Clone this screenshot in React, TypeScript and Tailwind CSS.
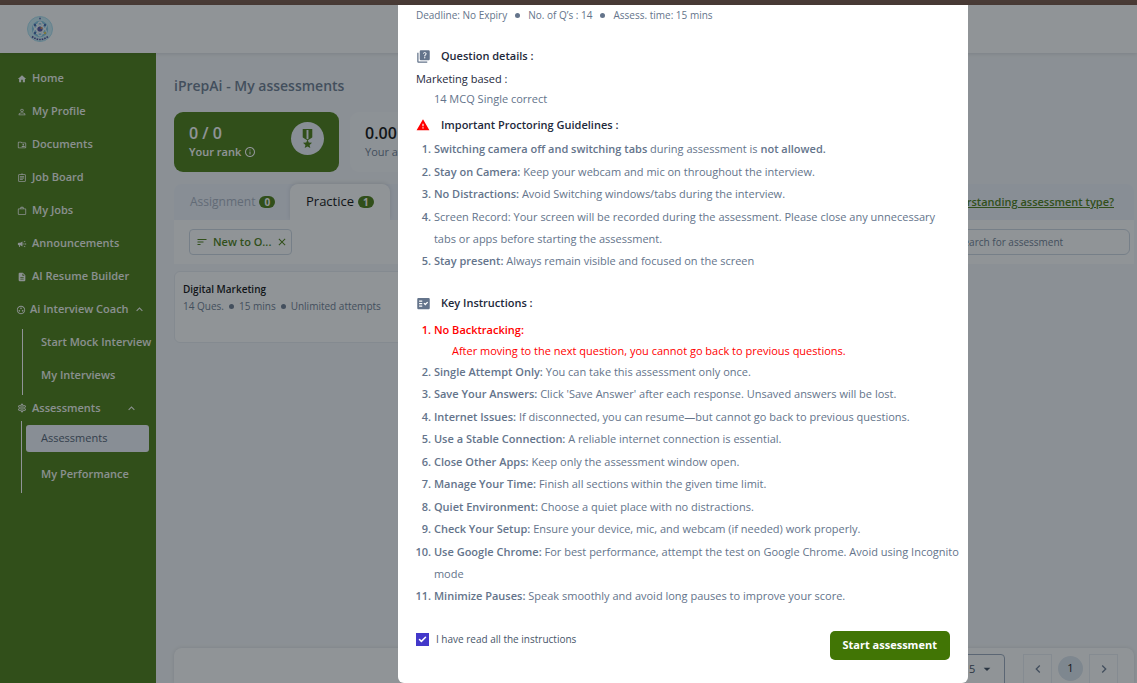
import { useState } from 'react';
import type { ReactNode } from 'react';
import type { IconType } from 'react-icons';
import { Check } from 'lucide-react';
import {
  MdArrowDropDown,
  MdCampaign,
  MdChevronLeft,
  MdChevronRight,
  MdClose,
  MdDescription,
  MdExpandLess,
  MdFactCheck,
  MdHome,
  MdMilitaryTech,
  MdOutlineAssignment,
  MdOutlineFolderShared,
  MdOutlineGroupWork,
  MdOutlineInfo,
  MdOutlineSettings,
  MdPermIdentity,
  MdQuiz,
  MdSort,
  MdWarning,
  MdWorkOutline,
} from 'react-icons/md';

const links: { label: string; icon: IconType }[] = [
  { label: 'Home', icon: MdHome },
  { label: 'My Profile', icon: MdPermIdentity },
  { label: 'Documents', icon: MdOutlineFolderShared },
  { label: 'Job Board', icon: MdOutlineAssignment },
  { label: 'My Jobs', icon: MdWorkOutline },
  { label: 'Announcements', icon: MdCampaign },
  { label: 'AI Resume Builder', icon: MdDescription },
];

const instructions: [string, string][] = [
  ['Single Attempt Only:', 'You can take this assessment only once.'],
  ['Save Your Answers:', "Click 'Save Answer' after each response. Unsaved answers will be lost."],
  ['Internet Issues:', 'If disconnected, you can resume—but cannot go back to previous questions.'],
  ['Use a Stable Connection:', 'A reliable internet connection is essential.'],
  ['Close Other Apps:', 'Keep only the assessment window open.'],
  ['Manage Your Time:', 'Finish all sections within the given time limit.'],
  ['Quiet Environment:', 'Choose a quiet place with no distractions.'],
  ['Check Your Setup:', 'Ensure your device, mic, and webcam (if needed) work properly.'],
  ['Use Google Chrome:', 'For best performance, attempt the test on Google Chrome. Avoid using Incognito mode'],
  ['Minimize Pauses:', 'Speak smoothly and avoid long pauses to improve your score.'],
];

function Logo() {
  return (
    <svg viewBox="0 0 26 26" className="size-[26px]" role="img" aria-label="College logo">
      <circle cx="13" cy="13" r="12.5" fill="#c9ecf7" stroke="#a5dcee" />
      <circle cx="13" cy="13" r="8.2" fill="#7cc3e0" />
      <g fill="none" stroke="#eef6fb" strokeWidth="1.3">
        <ellipse cx="13" cy="13" rx="3" ry="7" />
        <ellipse cx="13" cy="13" rx="3" ry="7" transform="rotate(60 13 13)" />
        <ellipse cx="13" cy="13" rx="3" ry="7" transform="rotate(120 13 13)" />
      </g>
      <circle cx="13" cy="13" r="2.6" fill="#4d4a9c" />
      <circle cx="14.5" cy="12" r="1.1" fill="#d88a4a" />
      <circle cx="8" cy="9" r="1.2" fill="#3a5fa8" />
      <circle cx="18" cy="9" r="1.2" fill="#3a5fa8" />
      <circle cx="8" cy="17" r="1.2" fill="#3a5fa8" />
      <circle cx="18" cy="17" r="1.2" fill="#d8c24a" />
      <circle cx="13" cy="2.6" r="1" fill="#5368b0" />
      <path d="M5 20.5 Q13 26.5 21 20.5" fill="none" stroke="#3d3f8f" strokeWidth="1.6" strokeDasharray="1.6 1" />
    </svg>
  );
}

function Dot() {
  return <span className="size-[5px] shrink-0 rounded-full bg-[#64748b]" />;
}

function Sidebar() {
  return (
    <nav aria-label="Main" className="w-[156px] shrink-0 bg-[#417505] pt-[9px] text-[11px] font-semibold text-white/95 shadow-[2px_0_6px_rgba(120,110,220,0.25)]">
      <ul>
        {links.map(({ label, icon: Icon }) => (
          <li key={label}>
            <a href="#" className="flex h-[33px] items-center gap-[5px] pl-[17px]">
              <Icon className="size-[10px]" />
              {label}
            </a>
          </li>
        ))}
      </ul>
      <button type="button" aria-expanded="true" className="flex h-[33px] w-full items-center gap-1 pl-4 whitespace-nowrap">
        <MdOutlineGroupWork className="size-[10px] shrink-0" />
        Ai Interview Coach
        <MdExpandLess className="size-[13px] shrink-0" />
      </button>
      <ul className="mt-[3px] ml-[22px] flex flex-col gap-[7px] border-l border-white pb-[7px]">
        <li><a href="#" className="flex h-[26px] items-center pl-[18px] whitespace-nowrap">Start Mock Interview</a></li>
        <li><a href="#" className="flex h-[26px] items-center pl-[18px]">My Interviews</a></li>
      </ul>
      <button type="button" aria-expanded="true" className="flex h-[26px] w-full items-center gap-[5px] pr-[18px] pl-[17px]">
        <MdOutlineSettings className="size-[10px]" />
        Assessments
        <MdExpandLess className="ml-auto size-[13px]" />
      </button>
      <ul className="ml-[21px] flex flex-col gap-[9px] border-l border-white pt-1 pr-[7px] pb-1.5 pl-1">
        <li>
          <a href="#" aria-current="page" className="flex h-[27px] items-center rounded-[3px] bg-[#eef2fb] pl-[15px] font-normal text-[#475569]">Assessments</a>
        </li>
        <li><a href="#" className="flex h-[26px] items-center pl-[15px]">My Performance</a></li>
      </ul>
    </nav>
  );
}

function CountBadge({ children }: { children: ReactNode }) {
  return <span className="rounded-full bg-[#417505] px-[5px] text-[10px] leading-3 font-bold text-white">{children}</span>;
}

function Main() {
  return (
    <main className="flex min-w-0 flex-1 flex-col bg-[#f5f7fa] pr-[3px] pl-[18px]">
      <h1 className="pt-[23px] text-[14px] leading-5 font-semibold text-[#64748b]">iPrepAi - My assessments</h1>
      <div className="mt-4 flex gap-[11px]">
        <section className="flex h-[60px] w-[165px] items-center justify-between rounded-[9px] bg-[#417505] px-[15px] text-white">
          <div>
            <p className="text-base leading-5 font-semibold">0 / 0</p>
            <p className="flex items-center gap-[3px] text-[11px] leading-[18px] font-semibold">Your rank <MdOutlineInfo className="size-3" /></p>
          </div>
          <span className="mb-[7px] flex size-[33px] items-center justify-center rounded-full bg-[#eef2fb] text-[#417505]">
            <MdMilitaryTech className="size-[23px]" />
          </span>
        </section>
        <section className="flex h-[60px] w-[165px] flex-col justify-center rounded-[9px] bg-[#f9fafc] pl-[15px]">
          <p className="text-base leading-5 font-semibold text-black">0.00</p>
          <p className="text-[11px] leading-[18px] text-[#64748b]">Your average</p>
        </section>
      </div>

      <div className="mt-3 flex h-9 items-stretch rounded-t-lg bg-[#eef2fb]">
        <button type="button" className="flex w-[116px] items-center gap-1 pl-4 text-[12px] text-[#a3adbd]">Assignment <CountBadge>0</CountBadge></button>
        <button type="button" className="flex w-[100px] items-center gap-1 rounded-t-lg bg-white pl-4 text-[13px] font-medium text-black shadow-[0_-1px_4px_rgba(0,0,0,0.12)]">Practice <CountBadge>1</CountBadge></button>
        <a href="#" className="ml-auto self-center pr-5 text-[11px] font-semibold text-[#417505] underline">Understanding assessment type?</a>
      </div>
      <div className="flex h-11 items-center justify-between bg-white pr-1 pl-[15px]">
        <button type="button" className="flex h-[26px] w-[103px] items-center gap-[5px] rounded border border-[#cbd5e1] pl-1.5 text-[11px] font-semibold whitespace-nowrap text-[#417505]">
          <MdSort className="size-3 shrink-0" />
          New to O...
          <MdClose className="mr-2 ml-auto size-3 shrink-0" />
        </button>
        <input aria-label="Search for assessment" placeholder="Search for assessment" className="h-[26px] w-[200px] rounded-md border border-[#cbd5e1] pl-[27px] text-[10px] text-[#475569] placeholder:text-[#64748b]" />
      </div>

      <article className="mt-[7px] h-[72px] w-[385px] rounded-md border border-[#e6eaf0] bg-white px-2 pt-2">
        <h2 className="text-[10px] leading-[18px] font-semibold text-black">Digital Marketing</h2>
        <p className="flex items-center gap-[5px] text-[10px] leading-4 text-[#64748b]">14 Ques. <Dot /> 15 mins <Dot /> Unlimited attempts</p>
      </article>

      <footer className="mt-auto flex h-[35px] items-start justify-end rounded-t-lg bg-white pt-1.5 pr-4 shadow-[0_0_4px_rgba(0,0,0,0.12)]">
        <div className="relative mr-[18px] flex text-[#334155]">
          <select aria-label="Rows per page" className="h-[30px] w-[60px] appearance-none rounded-t-sm border border-[#94a3b8] pl-[23px] text-[11px]">
            <option>5</option>
            <option>10</option>
          </select>
          <MdArrowDropDown className="pointer-events-none absolute top-[7px] right-2.5 size-4" />
        </div>
        <button type="button" aria-label="Previous page" className="flex h-[30px] w-[29px] items-center justify-center border border-[#e9edf2] text-[#64748b]"><MdChevronLeft className="size-4" /></button>
        <button type="button" className="mx-1.5 mt-0.5 flex size-[25px] items-center justify-center rounded-full bg-[#dbe4ee] text-[11px] text-black">1</button>
        <button type="button" aria-label="Next page" className="flex h-[30px] w-[29px] items-center justify-center border border-[#e9edf2] text-[#64748b]"><MdChevronRight className="size-4" /></button>
      </footer>
    </main>
  );
}

function SectionTitle({ icon, children }: { icon: ReactNode; children: ReactNode }) {
  return (
    <h3 className="flex h-5 items-center gap-[10px] font-semibold text-[#1e293b]">
      <span className="flex w-[15px] justify-center text-[#64748b]">{icon}</span>
      {children}
    </h3>
  );
}

function Strong({ children }: { children: ReactNode }) {
  return <strong className="font-semibold">{children}</strong>;
}

function InstructionsDialog() {
  const [accepted, setAccepted] = useState(true);
  return (
    <div role="dialog" aria-modal="true" aria-label="Assessment instructions" className="ml-[35%] w-[570px] rounded-b-md bg-white px-[18px] pb-[23px] text-[11px] text-[#64748b]">
      <p className="flex h-5 items-center gap-2 text-[10px]">Deadline: No Expiry <Dot /> No. of Q’s : 14 <Dot /> Assess. time: 15 mins</p>

      <div className="mt-[21px]">
        <SectionTitle icon={<MdQuiz className="size-[15px]" />}>Question details :</SectionTitle>
      </div>
      <p className="mt-[3px] leading-5 text-[#1e293b]">Marketing based :</p>
      <p className="pl-[18px] leading-5">14 MCQ Single correct</p>

      <div className="mt-1.5">
        <SectionTitle icon={<MdWarning className="size-[14px] text-[#ff0000]" />}>Important Proctoring Guidelines :</SectionTitle>
      </div>
      <ol className="mt-[3px] list-decimal pl-[18px] leading-[22px] marker:font-semibold">
        <li className="odd:mb-px"><Strong>Switching camera off and switching tabs</Strong> during assessment is <Strong>not allowed.</Strong></li>
        <li className="odd:mb-px"><Strong>Stay on Camera:</Strong> Keep your webcam and mic on throughout the interview.</li>
        <li className="odd:mb-px"><Strong>No Distractions:</Strong> Avoid Switching windows/tabs during the interview.</li>
        <li className="odd:mb-px">Screen Record: Your screen will be recorded during the assessment. Please close any unnecessary tabs or apps before starting the assessment.</li>
        <li><Strong>Stay present:</Strong> Always remain visible and focused on the screen</li>
      </ol>

      <div className="mt-[21px]">
        <SectionTitle icon={<MdFactCheck className="size-[15px]" />}>Key Instructions :</SectionTitle>
      </div>
      <ol className="-mr-3 mt-1.5 list-decimal pl-[18px] leading-[22px] marker:font-semibold">
        <li className="leading-[21px] text-[#ff0000]">
          <Strong>No Backtracking:</Strong>
          <p className="pl-[18px]">After moving to the next question, you cannot go back to previous questions.</p>
        </li>
        {instructions.map(([title, text]) => (
          <li key={title} className="odd:mb-px"><Strong>{title}</Strong> {text}</li>
        ))}
      </ol>

      <div className="mt-6 flex items-start justify-between">
        <label className="relative flex items-center gap-[7px] text-[10px] leading-4 text-[#475569]">
          <input type="checkbox" checked={accepted} onChange={(e) => setAccepted(e.target.checked)} className="size-[13px] appearance-none border border-[#4338ca] checked:bg-[#4338ca]" />
          {accepted && <Check strokeWidth={4} className="pointer-events-none absolute left-0.5 size-[9px] text-white" />}
          I have read all the instructions
        </label>
        <button type="button" className="h-[29px] rounded-[5px] bg-[#417505] px-[13px] text-[11px] font-bold text-white">Start assessment</button>
      </div>
    </div>
  );
}

export default function App() {
  return (
    <div className="flex h-screen flex-col overflow-hidden font-['Open_Sans',sans-serif]">
      <div className="h-[5px] shrink-0 bg-[#493b36]" />
      <header className="z-0 flex h-12 shrink-0 items-center bg-white pl-[27px] shadow-[0_1px_4px_rgba(0,0,0,0.12)]">
        <Logo />
      </header>
      <div className="flex min-h-0 flex-1">
        <Sidebar />
        <Main />
      </div>
      <div className="fixed inset-x-0 top-[5px] bottom-0 z-10 overflow-hidden bg-[rgba(33,41,47,0.5)]">
        <InstructionsDialog />
      </div>
    </div>
  );
}
